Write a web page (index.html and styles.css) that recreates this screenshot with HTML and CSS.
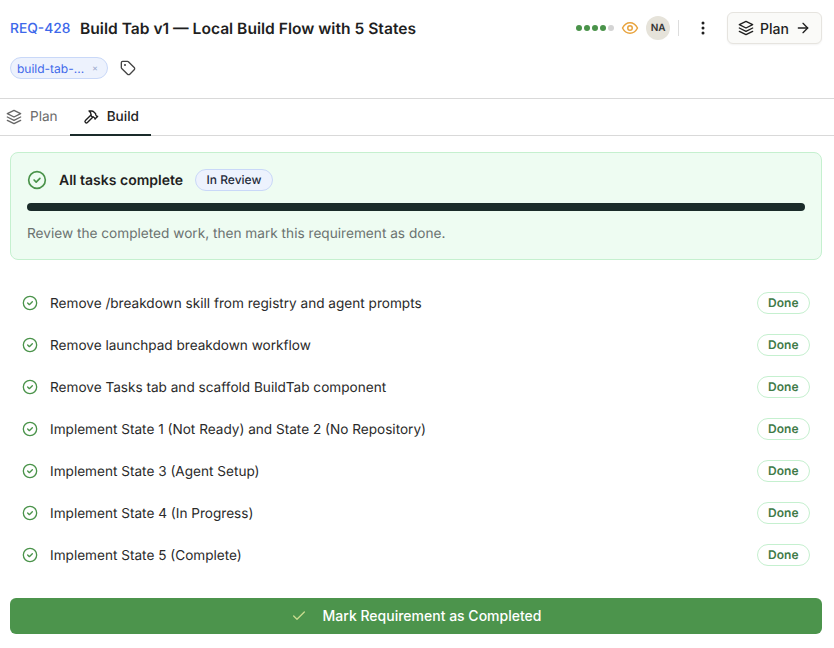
FILE: index.html
```html
<!DOCTYPE html>
<html lang="en">
<head>
    <meta charset="UTF-8">
    <title>REQ-428 Build Tab v1</title>
    <link rel="stylesheet" href="styles.css">
</head>
<body>
    <header class="header">
        <div class="title-row">
            <a class="req-id">REQ-428</a>
            <h1 class="title">Build Tab v1 — Local Build Flow with 5 States</h1>
            <div class="actions">
                <div class="dots">
                    <span class="dot on"></span><span class="dot on"></span><span class="dot on"></span><span class="dot on"></span><span class="dot"></span>
                </div>
                <svg class="eye" viewBox="0 0 24 24" fill="none" stroke="#e8a33d" stroke-width="2" stroke-linecap="round" stroke-linejoin="round"><path d="M2 12s3.600-7 10-7 10 7 10 7-3.600 7-10 7-10-7-10-7z"/><circle cx="12" cy="12" r="3"/></svg>
                <span class="avatar">NA</span>
                <span class="divider"></span>
                <svg class="more" viewBox="0 0 16 16" fill="#1f1f1f"><circle cx="8" cy="3" r="1.5"/><circle cx="8" cy="8" r="1.5"/><circle cx="8" cy="13" r="1.5"/></svg>
                <button class="plan-btn">
                    <svg class="icon-16" viewBox="0 0 24 24" fill="none" stroke="#1f1f1f" stroke-width="2" stroke-linecap="round" stroke-linejoin="round"><path d="M12 2 2 7l10 5 10-5-10-5z"/><path d="m2 12 10 5 10-5"/><path d="m2 17 10 5 10-5"/></svg>
                    <span>Plan</span>
                    <svg class="icon-16" viewBox="0 0 24 24" fill="none" stroke="#1f1f1f" stroke-width="2" stroke-linecap="round" stroke-linejoin="round"><path d="M5 12h14"/><path d="m12 5 7 7-7 7"/></svg>
                </button>
            </div>
        </div>
        <div class="tag-row">
            <span class="tag">build-tab-... <span class="tag-x">×</span></span>
            <svg class="tag-icon" viewBox="0 0 24 24" fill="none" stroke="#444" stroke-width="2" stroke-linecap="round" stroke-linejoin="round"><path d="M12.600 2.600A2 2 0 0 0 11.200 2H4a2 2 0 0 0-2 2v7.200a2 2 0 0 0 .6 1.400l8.700 8.700a2.400 2.400 0 0 0 3.400 0l6.600-6.600a2.400 2.400 0 0 0 0-3.400z"/><circle cx="7.500" cy="7.500" r=".6" fill="#444"/></svg>
        </div>
    </header>

    <nav class="tabs">
        <div class="tab">
            <svg class="icon-16" viewBox="0 0 24 24" fill="none" stroke="#666" stroke-width="2" stroke-linecap="round" stroke-linejoin="round"><path d="M12 2 2 7l10 5 10-5-10-5z"/><path d="m2 12 10 5 10-5"/><path d="m2 17 10 5 10-5"/></svg>
            Plan
        </div>
        <div class="tab active">
            <svg class="icon-16" viewBox="0 0 24 24" fill="none" stroke="#1f1f1f" stroke-width="2" stroke-linecap="round" stroke-linejoin="round"><path d="m15 12-8.373 8.373a1 1 0 1 1-3-3L12 9"/><path d="m18 15 4-4"/><path d="m21.500 11.500-1.914-1.914A2 2 0 0 1 19 8.172V7l-2.260-2.260a6 6 0 0 0-4.202-1.756L9 2.960l.92.82A6.180 6.180 0 0 1 12 8.400V10l2 2h1.172a2 2 0 0 1 1.414.586L18.500 14.500"/></svg>
            Build
        </div>
    </nav>

    <main class="content">
        <section class="summary">
            <div class="summary-head">
                <svg class="summary-check" viewBox="0 0 24 24" fill="none" stroke="#4a934a" stroke-width="2" stroke-linecap="round" stroke-linejoin="round"><circle cx="12" cy="12" r="10"/><path d="m8.500 12 2.500 2.500 4.500-4.500"/></svg>
                <strong>All tasks complete</strong>
                <span class="status">In Review</span>
            </div>
            <div class="progress"></div>
            <p class="summary-text">Review the completed work, then mark this requirement as done.</p>
        </section>

        <ul class="tasks">
            <li class="task">
                <svg class="check" viewBox="0 0 24 24" fill="none" stroke="#4a934a" stroke-width="2" stroke-linecap="round" stroke-linejoin="round"><circle cx="12" cy="12" r="10"/><path d="m8.500 12 2.500 2.500 4.500-4.500"/></svg>
                <span class="task-name">Remove /breakdown skill from registry and agent prompts</span>
                <span class="done">Done</span>
            </li>
            <li class="task">
                <svg class="check" viewBox="0 0 24 24" fill="none" stroke="#4a934a" stroke-width="2" stroke-linecap="round" stroke-linejoin="round"><circle cx="12" cy="12" r="10"/><path d="m8.500 12 2.500 2.500 4.500-4.500"/></svg>
                <span class="task-name">Remove launchpad breakdown workflow</span>
                <span class="done">Done</span>
            </li>
            <li class="task">
                <svg class="check" viewBox="0 0 24 24" fill="none" stroke="#4a934a" stroke-width="2" stroke-linecap="round" stroke-linejoin="round"><circle cx="12" cy="12" r="10"/><path d="m8.500 12 2.500 2.500 4.500-4.500"/></svg>
                <span class="task-name">Remove Tasks tab and scaffold BuildTab component</span>
                <span class="done">Done</span>
            </li>
            <li class="task">
                <svg class="check" viewBox="0 0 24 24" fill="none" stroke="#4a934a" stroke-width="2" stroke-linecap="round" stroke-linejoin="round"><circle cx="12" cy="12" r="10"/><path d="m8.500 12 2.500 2.500 4.500-4.500"/></svg>
                <span class="task-name">Implement State 1 (Not Ready) and State 2 (No Repository)</span>
                <span class="done">Done</span>
            </li>
            <li class="task">
                <svg class="check" viewBox="0 0 24 24" fill="none" stroke="#4a934a" stroke-width="2" stroke-linecap="round" stroke-linejoin="round"><circle cx="12" cy="12" r="10"/><path d="m8.500 12 2.500 2.500 4.500-4.500"/></svg>
                <span class="task-name">Implement State 3 (Agent Setup)</span>
                <span class="done">Done</span>
            </li>
            <li class="task">
                <svg class="check" viewBox="0 0 24 24" fill="none" stroke="#4a934a" stroke-width="2" stroke-linecap="round" stroke-linejoin="round"><circle cx="12" cy="12" r="10"/><path d="m8.500 12 2.500 2.500 4.500-4.500"/></svg>
                <span class="task-name">Implement State 4 (In Progress)</span>
                <span class="done">Done</span>
            </li>
            <li class="task">
                <svg class="check" viewBox="0 0 24 24" fill="none" stroke="#4a934a" stroke-width="2" stroke-linecap="round" stroke-linejoin="round"><circle cx="12" cy="12" r="10"/><path d="m8.500 12 2.500 2.500 4.500-4.500"/></svg>
                <span class="task-name">Implement State 5 (Complete)</span>
                <span class="done">Done</span>
            </li>
        </ul>

        <button class="complete-btn">
            <svg class="complete-check" viewBox="0 0 24 24" fill="none" stroke="#c9dc8f" stroke-width="2" stroke-linecap="round" stroke-linejoin="round"><path d="M20 6 9 17l-5-5"/></svg>
            Mark Requirement as Completed
        </button>
    </main>
</body>
</html>
```

FILE: styles.css
```css
* {
    box-sizing: border-box;
}
body {
    margin: 0;
    height: 648px;
    overflow: hidden;
    font-family: 'Inter', 'Liberation Sans', sans-serif;
    text-rendering: geometricPrecision;
    color: #1f1f1f;
    background-color: #fff;
}
svg {
    display: block;
    flex-shrink: 0;
}
.icon-16 {
    width: 16px;
    height: 16px;
}
.header {
    height: 99px;
    padding: 12px 12px 0 10px;
    border-bottom: 1px solid #d9d9d9;
}
.title-row {
    display: flex;
    align-items: center;
    height: 32px;
}
.req-id {
    margin-top: 1px;
    margin-right: 9.5px;
    font-size: 13.8px;
    font-weight: 500;
    color: #3d68ea;
}
.title {
    margin: 0;
    font-size: 15.6px;
    font-weight: 600;
    color: #1f1f1f;
}
.actions {
    margin-left: auto;
    display: flex;
    align-items: center;
}
.dots {
    display: flex;
    gap: 2px;
}
.dot {
    width: 6px;
    height: 6px;
    border-radius: 50%;
    background-color: #d4d4d4;
}
.dot.on {
    background-color: #4a934a;
}
.eye {
    width: 18px;
    height: 18px;
    margin-left: 7px;
}
.avatar {
    width: 24px;
    height: 24px;
    margin-left: 7px;
    border-radius: 50%;
    background-color: #e6e3da;
    font-size: 10px;
    font-weight: 600;
    line-height: 24px;
    text-align: center;
    color: #333;
}
.divider {
    width: 1px;
    height: 16px;
    margin-left: 8px;
    background-color: #ddd;
}
.more {
    width: 16px;
    height: 16px;
    margin-left: 16px;
}
.plan-btn {
    display: flex;
    align-items: center;
    gap: 6px;
    height: 32px;
    margin-left: 16px;
    padding: 0 10px;
    border: 1px solid #e6e4df;
    border-radius: 6px;
    background-color: #fafaf8;
    box-shadow: 0 1px 2px rgba(0,0,0,0.05);
    font-family: inherit;
    font-size: 14px;
    font-weight: 500;
    color: #1f1f1f;
}
.tag-row {
    display: flex;
    align-items: center;
    gap: 12px;
    margin-top: 13px;
}
.tag {
    display: flex;
    align-items: center;
    justify-content: space-between;
    width: 98px;
    height: 22px;
    padding: 0 9px 0 6px;
    border: 1px solid #c9d8f8;
    border-radius: 11px;
    background-color: #edf2fd;
    font-size: 12px;
    color: #3d68ea;
}
.tag-x {
    font-size: 9px;
    color: #9aa9cc;
}
.tag-icon {
    width: 16px;
    height: 16px;
}
.tabs {
    display: flex;
    height: 37px;
    border-bottom: 1px solid #d9d9d9;
}
.tab {
    display: flex;
    align-items: center;
    gap: 8px;
    height: 37px;
    padding: 0 12px 2px 6px;
    font-size: 13.6px;
    color: #6b6b6b;
}
.tab.active {
    padding: 0 12px 0 13px;
    border-bottom: 2px solid #1a2b2a;
    font-weight: 500;
    color: #1f1f1f;
}
.content {
    padding: 16px 12px 0 10px;
}
.summary {
    height: 108px;
    padding: 16px;
    border: 1px solid #c5f0cf;
    border-radius: 8px;
    background-color: #eefcf2;
}
.summary-head {
    display: flex;
    align-items: center;
    height: 22px;
}
.summary-check {
    width: 20px;
    height: 20px;
}
.summary-head strong {
    margin-left: 12px;
    font-size: 14px;
    font-weight: 600;
}
.status {
    margin-left: 12px;
    padding: 0 10.5px;
    height: 22px;
    line-height: 20px;
    border: 1px solid #c9d8f8;
    border-radius: 11px;
    background-color: #edf2fd;
    font-size: 12px;
    font-weight: 500;
    color: #1f2a3a;
}
.progress {
    height: 8px;
    margin-top: 12px;
    border-radius: 4px;
    background-color: #1a2b2a;
}
.summary-text {
    margin: 14px 0 0;
    font-size: 13.65px;
    line-height: 18px;
    color: #6b7270;
}
.tasks {
    list-style: none;
    margin: 22px 0 0;
    padding: 0;
}
.task {
    display: flex;
    align-items: center;
    height: 42px;
    padding: 0 12px;
}
.check {
    width: 16px;
    height: 16px;
}
.task-name {
    margin-top: 1px;
    margin-left: 12px;
    font-size: 13.6px;
    color: #2a2a2a;
}
.done {
    margin-left: auto;
    height: 22px;
    padding: 0 10.5px;
    line-height: 20px;
    border: 1px solid #c5f0cf;
    border-radius: 11px;
    font-size: 12px;
    font-weight: 600;
    color: #3f7a47;
}
.complete-btn {
    display: flex;
    align-items: center;
    justify-content: center;
    gap: 16px;
    width: 100%;
    height: 36px;
    margin-top: 22px;
    padding-bottom: 2px;
    border: none;
    border-radius: 6px;
    background-color: #4c944c;
    font-family: inherit;
    font-size: 14px;
    font-weight: 500;
    color: #fff;
}
.complete-check {
    width: 16px;
    height: 16px;
}
```
